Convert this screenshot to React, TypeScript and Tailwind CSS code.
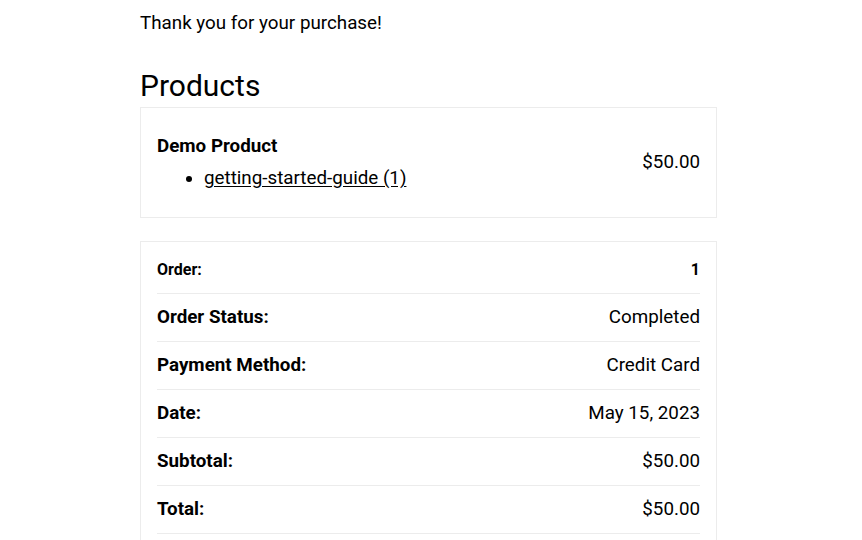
const rows: { label: string; value: string; small?: boolean }[] = [
  { label: 'Order:', value: '1', small: true },
  { label: 'Order Status:', value: 'Completed' },
  { label: 'Payment Method:', value: 'Credit Card' },
  { label: 'Date:', value: 'May 15, 2023' },
  { label: 'Subtotal:', value: '$50.00' },
  { label: 'Total:', value: '$50.00' },
];

export default function App() {
  return (
    <div className="min-h-screen bg-white text-black font-['Roboto',sans-serif]">
      <div className="w-[577px] ml-[140px] pt-[11px]">
        <p className="text-[18.8px] leading-[24px]">Thank you for your purchase!</p>

        <h2 className="mt-[33px] text-[30px] leading-[36px] font-normal">Products</h2>

        <div className="mt-[3px] border border-[#ececec] px-4 pt-[26px] pb-[27px] flex items-center justify-between">
          <div>
            <div className="text-[18.8px] leading-[24px] font-bold">Demo Product</div>
            <ul className="mt-2 pl-[47px] list-disc">
              <li className="text-[18.8px] leading-[24px]">
                <a href="#" className="underline underline-offset-2">getting-started-guide (1)</a>
              </li>
            </ul>
          </div>
          <div className="text-[18.8px] leading-[24px]">$50.00</div>
        </div>

        <div className="mt-[23px] border border-[#ececec] px-4 pt-1 pb-4">
          {rows.map((r) => (
            <div
              key={r.label}
              className="h-[48px] border-b border-[#ececec] flex items-center justify-between"
            >
              <span className={r.small ? 'text-[16px] font-bold' : 'text-[18.8px] font-bold'}>{r.label}</span>
              <span className={r.small ? 'text-[16px] font-bold' : 'text-[18.8px]'}>{r.value}</span>
            </div>
          ))}
        </div>
      </div>
    </div>
  );
}
